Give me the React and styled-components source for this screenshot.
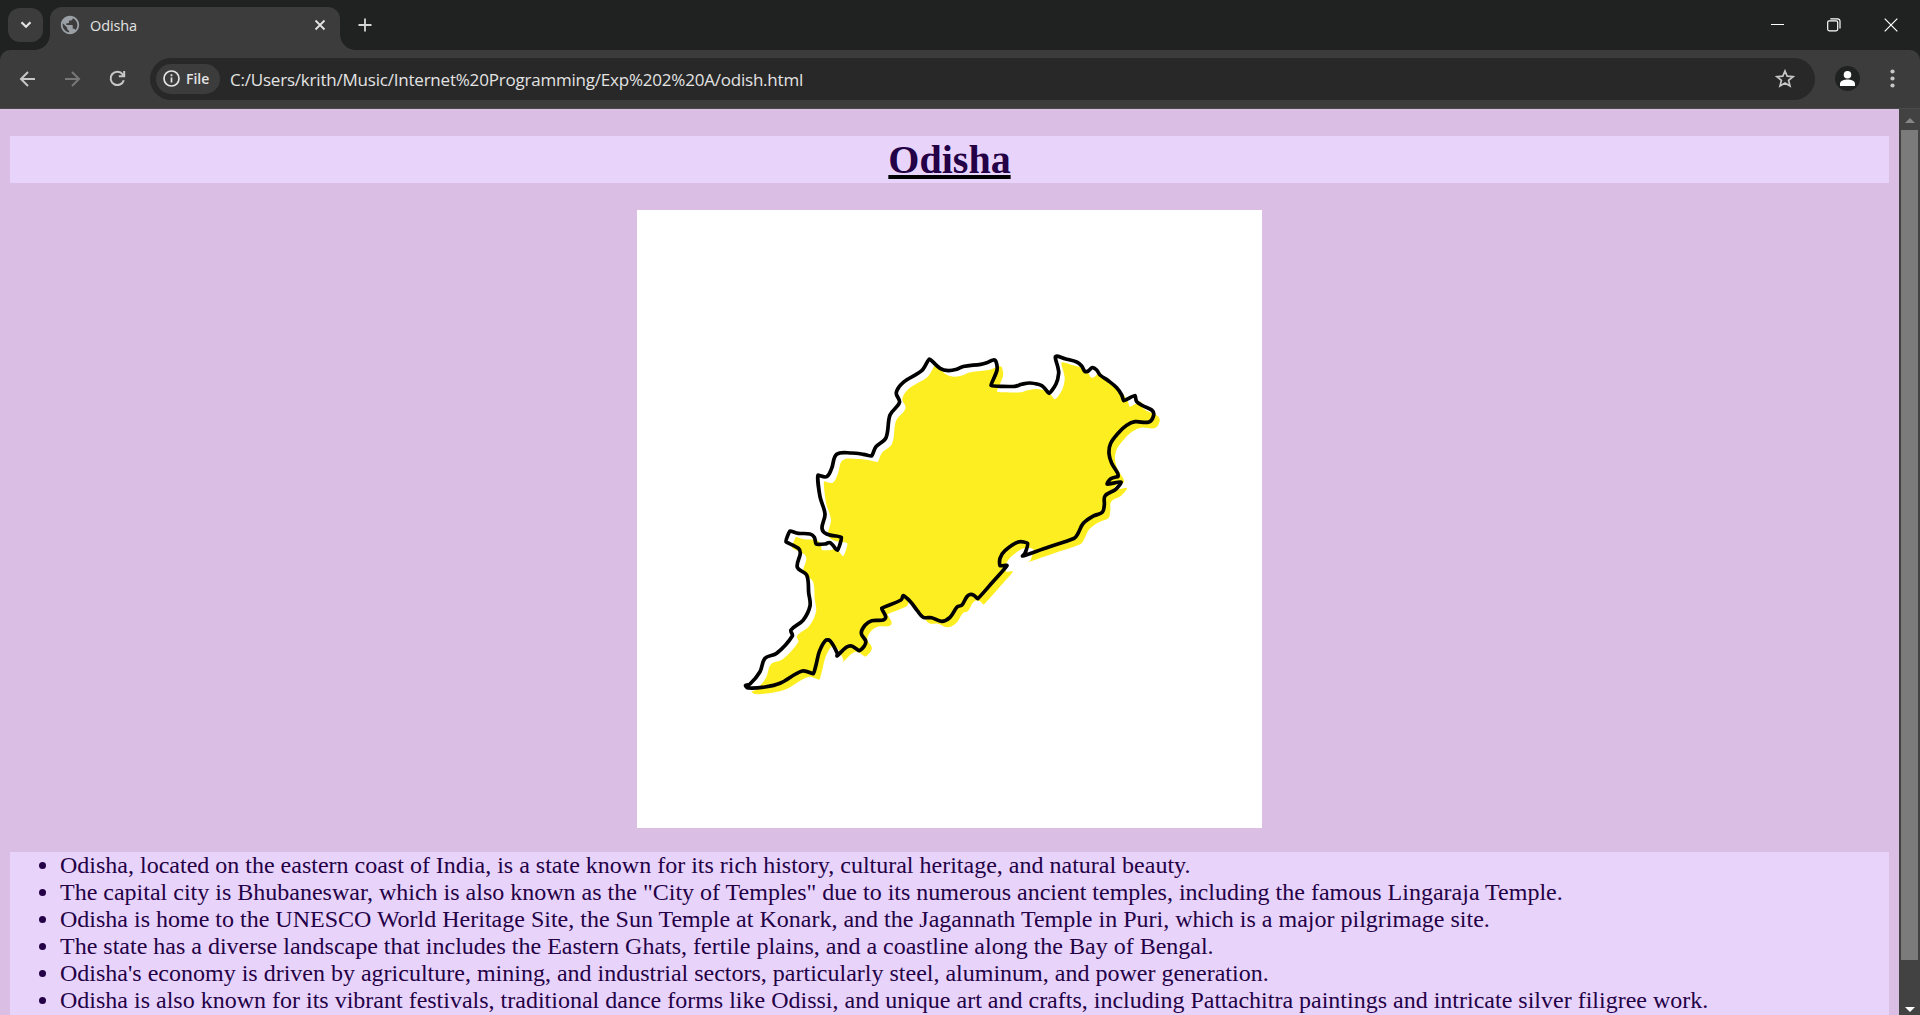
import React from 'react';
import styled, { createGlobalStyle } from 'styled-components';
import { MdPublic } from 'react-icons/md';

const GlobalStyle = createGlobalStyle`
  html, body { margin: 0; padding: 0; overflow: hidden; }
  * { box-sizing: border-box; }
`;

const Window = styled.div`
  display: flex;
  flex-direction: column;
  width: 1920px;
  height: 1015px;
  overflow: hidden;
  background: #202221;
  font-family: 'Open Sans', 'Noto Sans', sans-serif;
  color: #e3e3e3;
`;

const TabStrip = styled.div`
  display: flex;
  height: 50px;
  flex: none;
  padding-left: 8px;
`;

const TabSearch = styled.div`
  display: flex;
  align-items: center;
  justify-content: center;
  width: 35px;
  height: 34px;
  margin-top: 8px;
  border-radius: 12px;
  background: #3c3c3c;
`;

const Tab = styled.div`
  position: relative;
  display: flex;
  align-items: center;
  width: 290px;
  height: 43px;
  margin: 7px 0 0 7px;
  padding: 0 14px 7px 9px;
  border-radius: 12px 12px 0 0;
  background: #3c3c3c;
  &::before, &::after {
    content: '';
    position: absolute;
    bottom: 0;
    width: 15px;
    height: 15px;
  }
  &::before {
    right: 100%;
    background: radial-gradient(circle at 0 0, transparent 14.5px, #3c3c3c 15px);
  }
  &::after {
    left: 100%;
    background: radial-gradient(circle at 100% 0, transparent 14.5px, #3c3c3c 15px);
  }
`;

const Favicon = styled(MdPublic)`
  display: block;
  flex: none;
  width: 22px;
  height: 22px;
  margin-top: -1px;
  color: #9aa0a6;
`;

const TabTitle = styled.span`
  flex: 1;
  margin-left: 9px;
  padding-top: 1px;
  font-size: 14.5px;
  line-height: 20px;
  letter-spacing: -0.1px;
`;

const NewTab = styled.div`
  display: flex;
  align-items: center;
  margin: 0 auto 0 18px;
`;

const WindowControls = styled.div`
  display: flex;
  align-items: center;
  gap: 43px;
  padding: 0 22px 1px 0;
`;

const Toolbar = styled.div`
  display: flex;
  align-items: center;
  flex: none;
  height: 59px;
  padding: 0 0 1px 19px;
  border-radius: 10px 10px 0 0;
  border-bottom: 1px solid #4a4a4a;
  background: #3c3c3c;
`;

const NavIcons = styled.div`
  display: flex;
  align-items: center;
  gap: 28px;
  width: 131px;
`;

const Omnibox = styled.div`
  display: flex;
  align-items: center;
  width: 1665px;
  height: 42px;
  padding: 0 20px 0 6px;
  border-radius: 21px;
  background: #282828;
`;

const FileChip = styled.div`
  display: flex;
  align-items: center;
  gap: 6px;
  width: 64px;
  height: 30px;
  padding-left: 7px;
  border-radius: 15px;
  background: #3c3c3c;
  font-size: 14px;
  font-weight: 600;
`;

const Url = styled.span`
  flex: 1;
  margin-left: 10px;
  padding-top: 2px;
  font-size: 17px;
  line-height: 24px;
  letter-spacing: -0.21px;
  white-space: nowrap;
`;

const Avatar = styled.div`
  display: flex;
  margin: 0 30px 0 20px;
`;

const Viewport = styled.div`
  display: flex;
  flex: 1;
  min-height: 0;
`;

const Page = styled.main`
  flex: 1;
  padding: 27px 10px 0;
  overflow: hidden;
  background: #dabee3;
  color: #240046;
  font-family: 'Liberation Serif', 'Times New Roman', serif;
`;

const Heading = styled.h1`
  margin: 0;
  height: 47px;
  background: #e8d4fb;
  font-size: 40px;
  line-height: 47px;
  text-align: center;
`;

const Underlined = styled.span`
  text-decoration: underline;
  text-decoration-color: #000;
  text-decoration-thickness: 4px;
  text-underline-offset: 2px;
  text-decoration-skip-ink: none;
`;

const MapFigure = styled.figure`
  width: 625px;
  height: 618px;
  margin: 27px auto 24px;
  background: #fff;
`;

const Facts = styled.ul`
  margin: 0;
  padding: 0 0 0 50px;
  height: 260px;
  background: #e8d4fb;
  font-size: 24px;
  line-height: 27px;
`;

const Fact = styled.li`
  white-space: nowrap;
`;

const Scrollbar = styled.div`
  display: flex;
  flex-direction: column;
  align-items: center;
  width: 21px;
  background: #424242;
`;

const ScrollArrow = styled.svg`
  display: block;
  flex: none;
  margin: ${(p) => p.$margin};
  fill: ${(p) => p.$color};
`;

const Thumb = styled.div`
  width: 17px;
  height: 830px;
  background: #7b7b7b;
`;

const Icon = styled.svg`
  display: block;
  flex: none;
  fill: none;
  stroke: ${(p) => p.$color || '#c7c7c7'};
  stroke-width: ${(p) => p.$weight || 2};
`;

const BORDER = [
  [929.3, 359], [940, 368.3], [948.3, 370.7], [956.7, 369.3], [963.3, 366.5], [980.7, 364.3], [986.7, 362.7],
  [993.3, 360], [996, 361.7], [997, 370], [991, 385.5], [1000, 386.3], [1015, 386.3], [1021.7, 384.3],
  [1030, 383], [1041.7, 385.7], [1049, 393.3], [1056, 384], [1058.7, 373.3], [1057.7, 366.7], [1055.3, 357.3],
  [1057, 356.2], [1065, 358.7], [1076.7, 362], [1081.7, 366], [1085, 371.5], [1088.3, 371], [1092.3, 367.7],
  [1096.7, 370], [1100, 375], [1108.3, 380.7], [1116.7, 387.7], [1121.7, 395], [1123.7, 400.7], [1135, 395.5],
  [1136.7, 401.7], [1143.3, 406], [1151.7, 410], [1153.7, 415], [1149, 422], [1135, 421.7], [1126.7, 425.3],
  [1118.3, 433], [1110.7, 443.3], [1109, 453.3], [1111.7, 463.3], [1117.7, 473.3], [1118, 476.5], [1110.7, 478.7],
  [1107.2, 484.1], [1121, 482], [1115.7, 489.3], [1105, 496], [1104.3, 505], [1102.3, 512.3], [1093.3, 516],
  [1083.3, 523.3], [1077.7, 534], [1074.3, 538.3], [1048, 547.2], [1022.5, 556], [1025, 553.3], [1027.5, 543.3],
  [1018.3, 542], [1005, 550.7], [1000, 558.3], [1000, 565.7], [1007, 565.5], [992.5, 582.3], [977.7, 598.7],
  [974, 595.3], [970, 594.5], [966.7, 597], [961.7, 605.3], [957.3, 606.7], [950, 617.3], [941.7, 621.3],
  [931.7, 617.7], [923.3, 617.3], [917.3, 610.7], [910.5, 601.7], [903, 595.6], [901, 600], [881.7, 608.3],
  [885.7, 616.7], [883.3, 620], [871.7, 620.7], [865, 625.3], [861.3, 633.3], [865.7, 641], [864.3, 646],
  [859.3, 650.7], [851.7, 646], [846.7, 647], [837, 656], [837.3, 653.3], [830, 640.7], [825.3, 640.7],
  [819.3, 651.7], [816, 665], [813.3, 673.7], [802.3, 671], [780, 683.3], [765, 687], [748.3, 688],
  [745.5, 685.5], [750, 684], [760, 671.7], [765, 658.3], [776.7, 653.3], [792.3, 636], [791, 630],
  [803, 620.3], [810, 606], [808.7, 593], [806.7, 575], [797.3, 567.3], [800.3, 553.3], [798.3, 548.3],
  [786, 541.7], [790, 531], [798.3, 533.3], [810, 534], [814.3, 537.3], [816, 544], [825, 544],
  [830, 542.7], [837.3, 550.3], [841.3, 537.3], [826.7, 534], [822, 528.3], [825, 514], [820, 496.7],
  [818, 475.3], [826.7, 476.7], [831.7, 468.3], [836.7, 454.3], [851.7, 453], [863.3, 454.3], [871.7, 456],
  [876, 446.7], [886, 437.7], [890, 415], [899.5, 402.3], [896.3, 392.7], [903.3, 382.3], [921.7, 370.7],
];

// Closed cubic spline through every point of the border.
function smoothPath(points) {
  const n = points.length;
  let d = `M${points[0].join(' ')}`;
  const tangent = (i, len) => {
    const a = points[(i + n - 1) % n];
    const b = points[i % n];
    const c = points[(i + 1) % n];
    const inX = b[0] - a[0];
    const inY = b[1] - a[1];
    const outX = c[0] - b[0];
    const outY = c[1] - b[1];
    const cos = (inX * outX + inY * outY) / (Math.hypot(inX, inY) * Math.hypot(outX, outY));
    const chord = Math.hypot(c[0] - a[0], c[1] - a[1]);
    const reach = (cos > 0.3 ? 0.33 : 0.1) * len;
    return [((c[0] - a[0]) / chord) * reach, ((c[1] - a[1]) / chord) * reach];
  };
  for (let i = 0; i < n; i += 1) {
    const b = points[i];
    const c = points[(i + 1) % n];
    const len = Math.hypot(c[0] - b[0], c[1] - b[1]);
    const t1 = tangent(i, len);
    const t2 = tangent(i + 1, len);
    d += `C${b[0] + t1[0]} ${b[1] + t1[1]} ${c[0] - t2[0]} ${c[1] - t2[1]} ${c[0]} ${c[1]}`;
  }
  return `${d}Z`;
}

const BORDER_PATH = smoothPath(BORDER);

const FACTS = [
  'Odisha, located on the eastern coast of India, is a state known for its rich history, cultural heritage, and natural beauty.',
  'The capital city is Bhubaneswar, which is also known as the "City of Temples" due to its numerous ancient temples, including the famous Lingaraja Temple.',
  'Odisha is home to the UNESCO World Heritage Site, the Sun Temple at Konark, and the Jagannath Temple in Puri, which is a major pilgrimage site.',
  'The state has a diverse landscape that includes the Eastern Ghats, fertile plains, and a coastline along the Bay of Bengal.',
  "Odisha's economy is driven by agriculture, mining, and industrial sectors, particularly steel, aluminum, and power generation.",
  'Odisha is also known for its vibrant festivals, traditional dance forms like Odissi, and unique art and crafts, including Pattachitra paintings and intricate silver filigree work.',
];

function OdishaMap() {
  return (
    <svg width="625" height="618" viewBox="637 210 625 618" display="block">
      <path d={BORDER_PATH} fill="#fdee21" transform="translate(6 6)" />
      <path d={BORDER_PATH} fill="none" stroke="#000" strokeWidth="3.7" strokeLinejoin="round" />
    </svg>
  );
}

function BrowserTabs() {
  return (
    <TabStrip>
      <TabSearch>
        <Icon width="12" height="8" viewBox="0 0 12 8" $color="#e3e3e3" $weight="2.2"><path d="M1.5 1.3 6 5.8l4.5-4.5" /></Icon>
      </TabSearch>
      <Tab>
        <Favicon />
        <TabTitle>Odisha</TabTitle>
        <Icon width="12" height="12" viewBox="0 0 12 12" $color="#e3e3e3" $weight="1.8"><path d="m1.5 1.5 9 9m0-9-9 9" /></Icon>
      </Tab>
      <NewTab>
        <Icon width="14" height="14" viewBox="0 0 14 14" $color="#d5d5d5" $weight="1.8"><path d="M7 .5v13M.5 7h13" /></Icon>
      </NewTab>
      <WindowControls>
        <Icon width="13" height="13" viewBox="0 0 13 13" $color="#fff" $weight="1"><path d="M0 6.500h13" /></Icon>
        <Icon width="14" height="14" viewBox="0 0 14 14" $color="#fff" $weight="1.2">
          <rect x=".7" y="2.800" width="10" height="10" rx="1.500" />
          <path d="M3.300.8h7.200a2.500 2.500 0 0 1 2.500 2.500v7.200" />
        </Icon>
        <Icon width="14" height="14" viewBox="0 0 14 14" $color="#fff" $weight="1.2"><path d="m.7.7 12.600 12.600m0-12.600L.7 13.300" /></Icon>
      </WindowControls>
    </TabStrip>
  );
}

function BrowserToolbar() {
  return (
    <Toolbar>
      <NavIcons>
        <Icon width="17" height="16" viewBox="0 0 17 16"><path d="M16 8H2.500M9 1 2 8l7 7" /></Icon>
        <Icon width="17" height="16" viewBox="0 0 17 16" $color="#777"><path d="M1 8h13.500M8 1l7 7-7 7" /></Icon>
        <Icon width="17" height="17" viewBox="0 0 17 17"><path d="M14.800 10.200A6.700 6.700 0 1 1 13.700 4.300L15 5.700M15.200 1v5.300H9.800" /></Icon>
      </NavIcons>
      <Omnibox>
        <FileChip>
          <Icon width="17" height="17" viewBox="0 0 17 17" $color="#e3e3e3" $weight="1.7">
            <circle cx="8.500" cy="8.500" r="7.500" />
            <path d="M8.500 7.500v5M8.500 4.300v1.900" />
          </Icon>
          File
        </FileChip>
        <Url>C:/Users/krith/Music/Internet%20Programming/Exp%202%20A/odish.html</Url>
        <Icon width="20" height="19" viewBox="0 0 20 19" $weight="1.7">
          <path d="m10 2 2.200 5.200 5.800.5-4.400 3.700 1.400 5.600-5-3-5 3 1.400-5.600L2 7.700l5.800-.5z" />
        </Icon>
      </Omnibox>
      <Avatar>
        <svg width="25" height="25" viewBox="0 0 25 25">
          <circle cx="12.500" cy="12.500" r="12.500" fill="#202221" />
          <circle cx="12.500" cy="8.700" r="3.800" fill="#fff" />
          <path d="M5 20v-2.200c0-3 4.500-4.300 7.500-4.300s7.500 1.300 7.500 4.300V20z" fill="#fff" />
        </svg>
      </Avatar>
      <svg width="5" height="19" viewBox="0 0 5 19" fill="#c7c7c7">
        <circle cx="2.500" cy="2.500" r="2.100" />
        <circle cx="2.500" cy="9.500" r="2.100" />
        <circle cx="2.500" cy="16.500" r="2.100" />
      </svg>
    </Toolbar>
  );
}

export default function App() {
  return (
    <Window>
      <GlobalStyle />
      <BrowserTabs />
      <BrowserToolbar />
      <Viewport>
        <Page>
          <Heading><Underlined>Odisha</Underlined></Heading>
          <MapFigure><OdishaMap /></MapFigure>
          <Facts>
            {FACTS.map((fact) => <Fact key={fact}>{fact}</Fact>)}
          </Facts>
        </Page>
        <Scrollbar>
          <ScrollArrow width="10" height="5" viewBox="0 0 10 5" $color="#868686" $margin="9px 0 7px"><path d="M0 5 5 0l5 5z" /></ScrollArrow>
          <Thumb />
          <ScrollArrow width="10" height="5" viewBox="0 0 10 5" $color="#fff" $margin="auto 0 3px"><path d="M0 0h10L5 5z" /></ScrollArrow>
        </Scrollbar>
      </Viewport>
    </Window>
  );
}
